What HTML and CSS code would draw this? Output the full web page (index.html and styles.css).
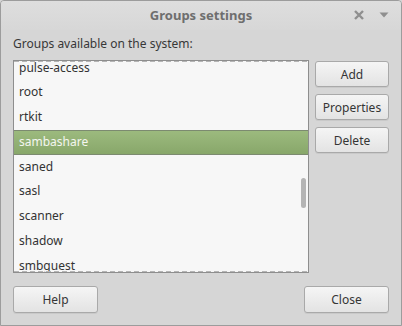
FILE: index.html
```html
<!DOCTYPE html>
<html>
<head>
<meta charset="utf-8">
<link rel="stylesheet" href="styles.css">
</head>
<body>
<div class="window">
  <div class="titlebar">
    <span></span>
    <span class="title">Groups settings</span>
    <span class="controls">
      <svg class="ctl" width="12" height="12" viewBox="0 0 12 12"><path d="M2 2 L10 10 M10 2 L2 10" stroke="#8f8f8f" stroke-width="2.4" stroke-linecap="butt"/></svg>
      <svg class="ctl" width="12" height="12" viewBox="0 0 12 12"><path d="M1.5 3.5 L10.5 3.5 L6 8.5 Z" fill="#8f8f8f"/></svg>
    </span>
  </div>
  <div class="content">
    <div class="label">Groups available on the system:</div>
    <div class="main">
      <div class="list">
        <div class="rows">
          <div class="row">pulse-access</div>
          <div class="row">root</div>
          <div class="row">rtkit</div>
          <div class="row selected">sambashare</div>
          <div class="row">saned</div>
          <div class="row">sasl</div>
          <div class="row">scanner</div>
          <div class="row">shadow</div>
          <div class="row">smbguest</div>
        </div>
        <div class="dash top"></div>
        <div class="dash bottom"></div>
        <div class="scrollbar"></div>
      </div>
      <div class="side">
        <button class="btn">Add</button>
        <button class="btn">Properties</button>
        <button class="btn">Delete</button>
      </div>
    </div>
    <div class="footer">
      <button class="btn wide">Help</button>
      <button class="btn wide">Close</button>
    </div>
  </div>
</div>
</body>
</html>
```
FILE: styles.css
```css
html, body {
  margin: 0;
  padding: 0;
  background: #d6d6d6;
}
body {
  width: 402px;
  height: 326px;
  font-family: "Noto Sans", "Open Sans", sans-serif;
  font-size: 12px;
  color: #3a3a3a;
}
.window {
  box-sizing: border-box;
  width: 402px;
  height: 326px;
  border: 1px solid #9c9c9c;
  border-radius: 4px 4px 0 0;
  background: #d6d6d6;
  display: flex;
  flex-direction: column;
}
.titlebar {
  height: 29px;
  display: grid;
  grid-template-columns: 1fr auto 1fr;
  align-items: center;
  background: linear-gradient(#dedede, #d7d7d7);
  border-radius: 3px 3px 0 0;
}
.title {
  font-weight: bold;
  color: #6e6e6e;
  font-size: 13px;
  padding-bottom: 1px;
}
.controls {
  justify-self: end;
  display: flex;
  align-items: center;
  gap: 13px;
  padding-right: 11px;
  padding-bottom: 2px;
}
.content {
  flex: 1;
  display: flex;
  flex-direction: column;
  padding: 5px 12px 12px 12px;
}
.label {
  line-height: 17px;
  height: 17px;
  margin-bottom: 8px;
  color: #383838;
}
.main {
  display: flex;
  gap: 6px;
}
.list {
  position: relative;
  box-sizing: border-box;
  width: 296px;
  height: 213px;
  border: 1px solid #8e8e8e;
  background: #f7f7f7;
  overflow: hidden;
}
.rows {
  margin-top: -5.5px;
}
.row {
  box-sizing: border-box;
  height: 24.75px;
  line-height: 24px;
  padding-left: 5px;
  color: #333;
}
.row.selected {
  background: linear-gradient(#9cba7e, #88a76a);
  border-top: 1px solid #7c8a70;
  border-bottom: 1px solid #7c8a70;
  line-height: 22px;
  color: #f4f6f0;
}
.dash {
  position: absolute;
  left: 0;
  right: 0;
  height: 1px;
  background: repeating-linear-gradient(90deg, #b5b5b5 0 5px, transparent 5px 8px);
}
.dash.top { top: 0; }
.dash.bottom { bottom: 0; }
.scrollbar {
  position: absolute;
  left: 287px;
  top: 117px;
  width: 5px;
  height: 30px;
  border-radius: 3px;
  background: #b4b4b4;
}
.side {
  display: flex;
  flex-direction: column;
  gap: 7px;
  padding-top: 1px;
}
.btn {
  box-sizing: border-box;
  width: 74px;
  height: 26px;
  padding: 0;
  font-family: "Noto Sans", "Open Sans", sans-serif;
  font-size: 12px;
  color: #353535;
  border: 1px solid #a9a9a9;
  border-radius: 3px;
  background: linear-gradient(#f5f5f5, #e3e3e3);
  box-shadow: 0 1px 0 rgba(0,0,0,0.06);
}
.footer {
  margin-top: auto;
  display: flex;
  justify-content: space-between;
}
.btn.wide {
  width: 85px;
  height: 27px;
}
```
